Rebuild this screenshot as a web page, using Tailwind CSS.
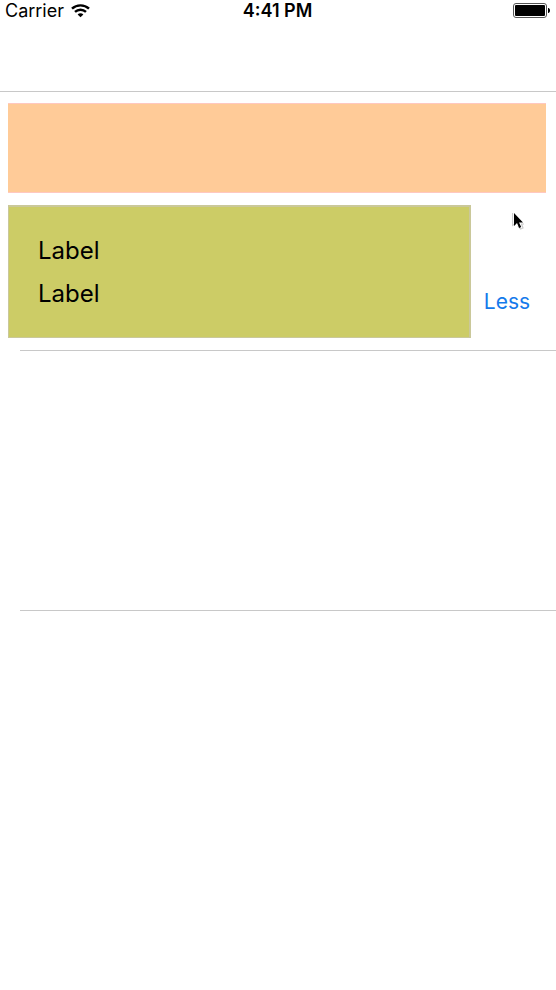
<!DOCTYPE html>
<html lang="en">
<head>
<meta charset="utf-8">
<meta name="viewport" content="width=device-width, initial-scale=1">
<title>Expandable cell</title>
<script src="https://cdn.jsdelivr.net/npm/@tailwindcss/browser@4"></script>
</head>
<body class="relative min-h-screen bg-white font-['Inter','Liberation_Sans',sans-serif] text-black">
  <header class="h-[92px] border-b border-[#c8c8c8]">
    <div class="grid h-[21px] grid-cols-[1fr_auto_1fr] items-center pr-[6px] pl-[5px] text-[18px] leading-[20px]">
      <div class="flex items-center gap-[7px]">
        <span>Carrier</span>
        <svg class="h-[14px] w-[19px]" viewBox="0 0 19 14" fill="none" stroke="#000" stroke-width="2.4" aria-label="Wi-Fi">
          <path d="M1 4.700C5.700.2 13.300.2 18 4.700"/>
          <path d="M4 7.900C7.100 5 11.900 5 15 7.900"/>
          <path d="M9.500 13.300 6.600 10.400C8.200 8.900 10.800 8.900 12.400 10.400Z" fill="#000" stroke="none"/>
        </svg>
      </div>
      <time class="font-semibold">4:41 PM</time>
      <svg class="h-[15px] w-[37px] justify-self-end" viewBox="0 0 37 15" aria-label="Battery full">
        <rect x=".5" y=".5" width="33" height="14" rx="2.500" fill="#fff" stroke="#555"/>
        <rect x="2" y="2" width="30" height="11" rx="1" fill="#000"/>
        <path d="M35 5h.5C36.500 5.500 37 6.300 37 7.500s-.5 2-1.500 2.500H35Z" fill="#000"/>
      </svg>
    </div>
  </header>
  <main>
    <section class="ml-5 border-b border-[#c8c8c8] pt-[11px] pb-3">
      <div class="mr-[10px] -ml-3 h-[90px] border-y border-[#ffc8c0] bg-[#ffcb98]"></div>
      <div class="mt-3 -ml-3 flex items-end">
        <div class="flex h-[133px] flex-1 flex-col justify-center gap-[11px] border border-t-2 border-r-2 border-[#cac89a] bg-[#cccc66] pl-[29px] text-[24px] leading-[32px]">
          <p>Label</p>
          <p>Label</p>
        </div>
        <button type="button" class="mr-[25px] mb-[22px] ml-[12px] w-[48px] text-[21px] leading-[28px] text-[#147aeb]">Less</button>
      </div>
    </section>
    <section class="ml-5 h-[260px] border-b border-[#c8c8c8]"></section>
  </main>
  <svg class="absolute top-[213px] right-[31px] h-[19px] w-[13px]" viewBox="0 0 13 19" aria-hidden="true">
    <path d="M.5 0v12.500l3-2M6 13l2.500 3 2.500-1-1.500-4H12" fill="none" stroke="#ccc" stroke-width="1.200"/>
    <path d="M2 0v13l3-3 2.200 5 2-1-2.200-4.500H11Z" fill="#000"/>
  </svg>
</body>
</html>
